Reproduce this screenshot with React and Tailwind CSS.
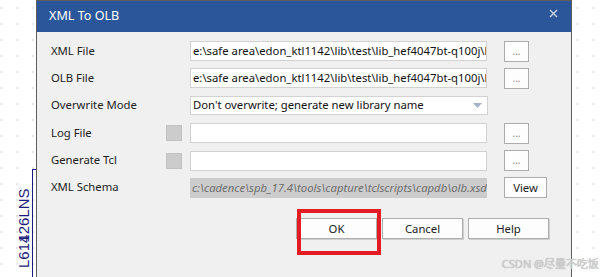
import React from 'react';

const PATH = 'e:\\safe area\\edon_ktl1142\\lib\\test\\lib_hef4047bt-q100j\\lib_hef4047bt-q100j.olb';
const SCHEMA = 'c:\\cadence\\spb_17.4\\tools\\capture\\tclscripts\\capdb\\olb.xsd';

const Browse = ({ label = '...' }) => (
  <button className="ml-[17px] h-[21px] w-[25px] bg-[#fdfdfd] border border-[#adadad] text-[10px] leading-none text-[#9a8a8a] flex items-end justify-center pb-[5px]">
    {label}
  </button>
);

const Check = () => <div className="w-[16px] h-[16px] bg-[#cccccc] border border-[#c2c2c2]"></div>;

const Row = ({ label, check, children }) => (
  <div className="flex items-center h-[20px]">
    <div className="w-[115px] text-[#222]">{label}</div>
    <div className="w-[24px] flex">{check && <Check />}</div>
    {children}
  </div>
);

const Field = ({ value = '' }) => (
  <div className="w-[297px] h-[20px] bg-white border border-[#d2d2d2] px-[2px] overflow-hidden whitespace-nowrap leading-[18px] text-[#111]">
    {value}
  </div>
);

const Btn = ({ children }) => (
  <button className="w-[81px] h-[21px] bg-[#fdfdfd] border border-[#adadad] shadow-[1px_1px_0_#d0d0d0] text-[#222] leading-none">
    {children}
  </button>
);

export default function App() {
  return (
    <div
      className="relative flex w-[607px] h-[277px] overflow-hidden bg-white bg-[radial-gradient(circle,#b4b4b4_0.5px,transparent_0.8px)] bg-[length:16px_16px] bg-[position:-7px_0px]"
      style={{ fontFamily: '"Noto Sans", "Open Sans", sans-serif' }}
    >
      {/* schematic part on the left */}
      <div className="relative w-[36px] shrink-0">
        <div className="absolute left-[32px] top-[169px] w-[4px] h-[120px] border-l border-t border-[#1c1c7a]"></div>
        <div
          className="absolute left-[16px] top-[268px] origin-top-left -rotate-90 whitespace-nowrap text-[15px] leading-none text-[#1c1c7a]"
          style={{ fontFamily: '"Liberation Sans", Arial, sans-serif' }}
        >
          L61<span>4</span><span className="-ml-[8px]">1</span>26LNS
        </div>
      </div>

      {/* dialog */}
      <div className="w-[536px] shrink-0 flex flex-col bg-[#f0f0f0] border-x border-t border-[#5e5e5e] text-[11.3px]">
        <div className="h-[31px] bg-[#2b579a] flex items-center justify-between pl-[12px] pr-[13px]">
          <span className="text-white text-[12.6px]">XML To OLB</span>
          <svg width="9" height="9" viewBox="0 0 9 9" className="mb-[6px]">
            <path d="M1 1 L8 8 M8 1 L1 8" stroke="#c9d5ea" strokeWidth="1.4" />
          </svg>
        </div>

        <div className="flex flex-col gap-[7.4px] pt-[9px] pl-[14px]">
          <Row label="XML File">
            <Field value={PATH} />
            <Browse />
          </Row>
          <Row label="OLB File">
            <Field value={PATH} />
            <Browse />
          </Row>
          <Row label="Overwrite Mode">
            <div className="w-[298px] h-[19px] bg-white border border-[#d2d2d2] px-[2px] flex items-center justify-between text-[#111]">
              <span className="whitespace-nowrap">Don't overwrite; generate new library name</span>
              <svg width="9" height="5" viewBox="0 0 9 5" className="mr-[3px]">
                <path d="M0 0 H9 L4.5 5 Z" fill="#a3b1c9" />
              </svg>
            </div>
          </Row>
          <Row label="Log File" check>
            <Field />
            <Browse />
          </Row>
          <Row label="Generate Tcl" check>
            <Field />
            <Browse />
          </Row>
          <Row label="XML Schema">
            <div className="w-[297px] h-[20px] bg-[#cccccc] px-[2px] overflow-hidden whitespace-nowrap leading-[20px] italic text-[#6f6f6f]">
              {SCHEMA}
            </div>
            <button className="ml-[17px] h-[21px] w-[43px] bg-[#fdfdfd] border border-[#adadad] text-[#222] leading-none">
              View
            </button>
          </Row>
        </div>

        <div className="flex justify-end gap-[5px] pr-[22px] mt-[20px]">
          <div className="relative">
            <Btn>OK</Btn>
            <div className="absolute left-[1px] -top-[9px] w-[84px] h-[46px] border-[4px] border-[#e31b23]"></div>
          </div>
          <Btn>Cancel</Btn>
          <Btn>Help</Btn>
        </div>
      </div>

      <div className="flex-1"></div>

      <div
        className="absolute right-[8px] bottom-[5px] text-[11px] text-[#d2d2d2] whitespace-nowrap [text-shadow:0_0_1px_#9a9a9a]"
        style={{ fontFamily: '"Noto Sans", "Noto Sans CJK SC", sans-serif' }}
      >
        CSDN @尽量不吃饭
      </div>
    </div>
  );
}
